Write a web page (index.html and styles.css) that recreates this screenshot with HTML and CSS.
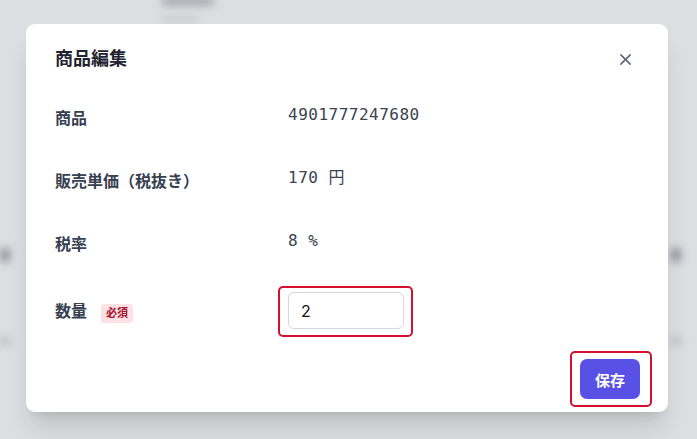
FILE: index.html
```html
<!DOCTYPE html>
<html lang="ja">
<head>
    <meta charset="UTF-8">
    <meta name="viewport" content="width=device-width, initial-scale=1.0">
    <title>商品編集</title>
    <link rel="stylesheet" href="styles.css">
</head>
<body>
    <!-- page behind the dialog, blurred -->
    <div class="backdrop">
        <div class="bg-head">
            <span class="bg-blob bg-blob-top"></span>
            <span class="bg-blob bg-blob-sub"></span>
        </div>
        <div class="bg-row">
            <span class="bg-dot"></span>
            <span class="bg-dot"></span>
        </div>
        <div class="bg-row bg-row-faint">
            <span class="bg-dot"></span>
            <span class="bg-dot"></span>
        </div>
    </div>

    <div class="modal">
        <div class="modal-header">
            <h2 class="modal-title">商品編集</h2>
            <button class="close-btn" aria-label="閉じる">
                <svg width="13" height="13" viewBox="0 0 14 14" fill="none" stroke="currentColor" stroke-width="1.6" stroke-linecap="round">
                    <path d="M2 2 L12 12 M12 2 L2 12"/>
                </svg>
            </button>
        </div>

        <div class="form">
            <div class="form-row">
                <div class="form-label">商品</div>
                <div class="form-value">4901777247680</div>
            </div>
            <div class="form-row">
                <div class="form-label">販売単価（税抜き）</div>
                <div class="form-value">170 円</div>
            </div>
            <div class="form-row">
                <div class="form-label">税率</div>
                <div class="form-value">8 %</div>
            </div>
            <div class="form-row form-row-input">
                <div class="form-label">数量 <span class="required">必須</span></div>
                <div class="hl hl-input">
                    <input class="qty-input" type="text" value="2">
                </div>
            </div>
        </div>

        <div class="modal-footer">
            <div class="hl hl-btn">
                <button class="save-btn">保存</button>
            </div>
        </div>
    </div>
</body>
</html>
```

FILE: styles.css
```css
body {
    margin: 0;
    width: 697px;
    height: 439px;
    overflow: hidden;
    background: #dddee2;
    font-family: Inter, "Noto Sans CJK JP", sans-serif;
    position: relative;
}

.backdrop {
    filter: blur(4px);
}

.bg-head {
    height: 30px;
    padding-left: 162px;
}

.bg-blob {
    display: block;
    background: #9a9ca3;
    border-radius: 3px;
}

.bg-blob-top {
    width: 52px;
    height: 7px;
    margin-top: -2px;
}

.bg-blob-sub {
    width: 36px;
    height: 5px;
    margin-top: 12px;
    background: #c3c5ca;
}

.bg-row {
    display: flex;
    justify-content: space-between;
    margin-top: 220px;
}

.bg-dot {
    width: 10px;
    height: 14px;
    background: #8d9098;
    border-radius: 4px;
}

.bg-dot:last-child {
    margin-right: 16px;
}

.bg-row-faint {
    margin-top: 75px;
}

.bg-row-faint .bg-dot {
    background: #b6b8be;
    height: 8px;
}

.modal {
    position: absolute;
    left: 26px;
    top: 24px;
    width: 642px;
    height: 388px;
    box-sizing: border-box;
    background: #fff;
    border-radius: 9px;
    padding: 23px 28px 13px 29px;
    box-shadow: 0 20px 25px -5px rgba(0, 0, 0, 0.12), 0 8px 10px -6px rgba(0, 0, 0, 0.1);
    display: flex;
    flex-direction: column;
}

.modal-header {
    display: flex;
    justify-content: space-between;
    align-items: center;
    height: 24px;
}

.modal-title {
    margin: 0;
    font-size: 18px;
    font-weight: 700;
    color: #1f2430;
    line-height: 24px;
}

.close-btn {
    border: none;
    background: none;
    padding: 0;
    color: #5b6170;
    display: flex;
    margin-right: 8px;
}

.form {
    margin-top: 29px;
    display: flex;
    flex-direction: column;
    gap: 24px;
}

.form-row {
    display: flex;
    align-items: flex-start;
    height: 39px;
}

.form-row-input {
    margin-top: 3px;
    height: 37px;
}

.form-label {
    width: 233px;
    padding-top: 7px;
    font-size: 16px;
    line-height: 22px;
    font-weight: 700;
    color: #374050;
    display: flex;
    align-items: center;
}

.form-value {
    padding-top: 4px;
    font-family: "DejaVu Sans Mono", "Noto Sans CJK JP", monospace;
    font-size: 16px;
    letter-spacing: 0.5px;
    line-height: 22px;
    color: #3b4250;
}

.required {
    margin-left: 14px;
    margin-top: 5px;
    background: #fde1e4;
    color: #a3122f;
    font-size: 11px;
    font-weight: 700;
    border-radius: 3px;
    padding: 0 5px;
    line-height: 19px;
    letter-spacing: 0;
}

.hl {
    position: relative;
}

.hl::after {
    content: '';
    position: absolute;
    border: 2px solid #d3112e;
    border-radius: 5px;
    pointer-events: none;
}

.hl-input::after {
    top: -6px;
    left: -10px;
    right: -9px;
    bottom: -8px;
}

.qty-input {
    width: 116px;
    height: 37px;
    box-sizing: border-box;
    border: 1px solid #d4d7dd;
    border-radius: 6px;
    padding: 0 12px;
    font-family: Inter, sans-serif;
    font-size: 16px;
    color: #111;
    outline: none;
}

.modal-footer {
    margin-top: auto;
    display: flex;
    justify-content: flex-end;
}

.hl-btn::after {
    top: -8px;
    left: -10px;
    right: -12px;
    bottom: -8px;
}

.save-btn {
    width: 60px;
    height: 40px;
    border: none;
    border-radius: 7px;
    background: #5950e5;
    color: #fff;
    font-family: "Noto Sans CJK JP", sans-serif;
    font-size: 15px;
    font-weight: 700;
    display: block;
}
```
